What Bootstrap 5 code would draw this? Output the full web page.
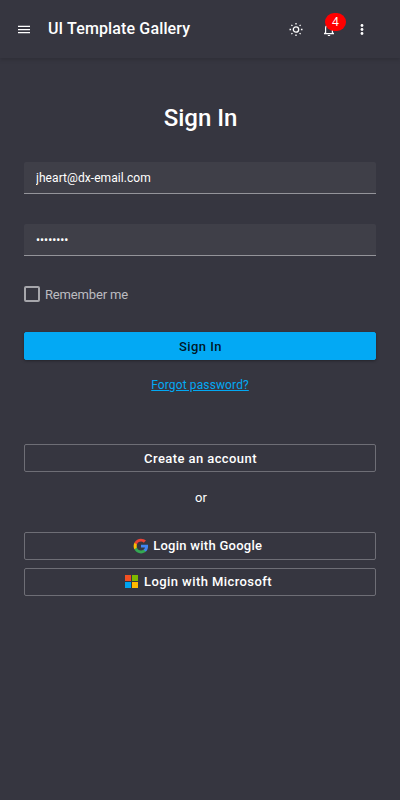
<!DOCTYPE html>
<html lang="en" data-bs-theme="dark">
<head>
<meta charset="utf-8">
<meta name="viewport" content="width=device-width, initial-scale=1">
<title>UI Template Gallery</title>
<link href="https://cdn.jsdelivr.net/npm/bootstrap@5.3.0/dist/css/bootstrap.min.css" rel="stylesheet">
<style>
body{background:#363640;color:#fff;font:400 13px/1.5 Roboto,sans-serif;min-height:100vh}
.top-bar{height:58px;box-shadow:0 2px 4px rgba(0,0,0,.14)}
.top-bar .btn{width:32px;height:32px;border:0}
.top-title{font-size:16px;font-weight:500;line-height:24px;margin-left:8px;letter-spacing:.14px}
.top-actions{margin-right:14px}
.top-actions .theme-btn,.top-actions .bell-btn{margin-right:1px}
.notify-count{top:0;left:12px;width:21px;height:18px;border-radius:9px;background:#f00;font:12px/18px "Noto Sans",sans-serif}
.sign-form{padding:42px 24px 0}
.sign-title{font-size:24px;font-weight:500;line-height:36px;margin-bottom:26px;padding-left:1px}
.form-control.filled{height:32px;font-size:12px;line-height:18px;padding:7px 12px 6px;color:#fff;background:#3f3f48;border:0;border-bottom:1px solid #94949a;border-radius:2px 2px 0 0;margin-bottom:30px}
.filled.email-input{letter-spacing:.07px}
.remember .form-check-input{width:16px;height:16px;margin:0;border:2px solid #a6a6ab;border-radius:2px;background:transparent}
.remember{height:16px;gap:5px;margin-bottom:30px;color:#bcbcc0;letter-spacing:-.15px}
.remember span{padding-top:2px}
.btn-flat{height:28px;padding:2px 0 0 1px;border-radius:2px;font-size:13px;font-weight:500;letter-spacing:.42px;line-height:20px;color:#fff;border:1px solid #6e6e76}
.btn-flat.btn-main{background:#03a9f4;border-color:#03a9f4;color:rgba(0,0,0,.87);box-shadow:0 1px 3px rgba(0,0,0,.35)}
.btn-flat.btn-login{padding:0 4px 0 0}
.btn-flat.btn-google{letter-spacing:.27px;padding-right:4.5px}
.forgot{font-size:12px;line-height:18px;margin:16px 0 50px;letter-spacing:.12px}
.forgot a{color:#03a9f4}
.or-text{line-height:20px;margin:16px 0 24px;padding-left:2px}
</style>
<script src="https://cdn.jsdelivr.net/npm/bootstrap@5.3.0/dist/js/bootstrap.bundle.min.js"></script>
</head>
<body>
<header class="top-bar d-flex align-items-center px-2">
  <button class="btn p-0 d-flex align-items-center justify-content-center" aria-label="Menu"><svg width="12" height="10" viewBox="0 0 12 10" fill="#fff"><path d="M0 1.700h12V3H0zM0 5h12v1.200H0zM0 8h12v1.300H0z"/></svg></button>
  <span class="top-title">UI Template Gallery</span>
  <div class="top-actions d-flex ms-auto">
    <button class="theme-btn btn p-0 d-flex align-items-center justify-content-center" aria-label="Theme"><svg width="14" height="14" viewBox="0 -.5 14 14" fill="none" stroke="#fff" stroke-width="1.300"><circle cx="7" cy="7" r="2.700"/><path d="M7 .5v1.600M7 11.900v1.600M.5 7h1.600M11.900 7h1.600M2.400 2.400l1 1M10.600 10.600l1 1M2.400 11.600l1-1M10.600 3.400l1-1"/></svg></button>
    <button class="bell-btn btn p-0 d-flex align-items-center justify-content-center position-relative" aria-label="Notifications"><svg class="me-1" width="14" height="14" viewBox="-1 0 14 14" fill="#fff"><path fill-rule="evenodd" d="M5 1h2v1c2 .5 3 2 3 4v4l1 1v1H1v-1l1-1V6c0-2 1-3.500 3-4zM3.200 10.700h5.600V6C8.800 4 7.800 3 6 3S3.200 4 3.200 6zM4.700 12.600h2.600c0 1.500-2.600 1.500-2.600 0z" transform="translate(2 .3)"/></svg><span class="notify-count position-absolute text-white">4</span></button>
    <button class="btn p-0 d-flex align-items-center justify-content-center" aria-label="More"><svg width="4" height="12" viewBox="0 -.5 4 12" fill="#fff"><circle cx="2" cy="2" r="1.400"/><circle cx="2" cy="6" r="1.400"/><circle cx="2" cy="10" r="1.400"/></svg></button>
  </div>
</header>
<main class="sign-form d-flex flex-column">
  <h1 class="sign-title text-center">Sign In</h1>
  <input class="form-control filled email-input" type="text" value="jheart@dx-email.com" aria-label="Email">
  <input class="form-control filled" type="password" value="password" aria-label="Password">
  <label class="remember d-flex align-items-center"><input class="form-check-input" type="checkbox"><span>Remember me</span></label>
  <button class="btn btn-flat btn-main">Sign In</button>
  <div class="forgot text-center"><a href="#">Forgot password?</a></div>
  <button class="btn btn-flat">Create an account</button>
  <div class="or-text text-center">or</div>
  <button class="btn btn-flat btn-login btn-google d-flex align-items-center justify-content-center mb-2"><svg class="me-1" width="16" height="16" viewBox="-1 -1 26 26"><path fill="#4285f4" d="M23.500 12.300c0-.9-.1-1.600-.2-2.300H12v4.500h6.500c-.3 1.500-1.100 2.700-2.400 3.600v3h3.900c2.200-2.100 3.500-5.100 3.500-8.800z"/><path fill="#34a853" d="M12 24c3.200 0 6-1.100 8-2.900l-3.900-3c-1.100.7-2.500 1.200-4.100 1.200-3.100 0-5.800-2.100-6.700-5H1.300v3.100C3.300 21.300 7.300 24 12 24z"/><path fill="#fbbc05" d="M5.300 14.300c-.5-1.500-.5-3.100 0-4.600V6.600h-4c-1.700 3.400-1.700 7.400 0 10.800z"/><path fill="#ea4335" d="M12 4.800c1.800 0 3.300.6 4.600 1.800L20 3.200C15 -1.500 5.300-1.400 1.300 6.600l4 3.100c.9-2.900 3.600-4.900 6.700-4.900z"/></svg><span>Login with Google</span></button>
  <button class="btn btn-flat btn-login d-flex align-items-center justify-content-center"><svg class="me-1" width="16" height="16" viewBox="0 0 16 16"><path fill="#f25022" d="M1 1h6v6H1z"/><path fill="#7fba00" d="M8 1h6v6H8z"/><path fill="#00a4ef" d="M1 8h6v6H1z"/><path fill="#ffb900" d="M8 8h6v6H8z"/></svg><span>Login with Microsoft</span></button>
</main>
</body>
</html>
